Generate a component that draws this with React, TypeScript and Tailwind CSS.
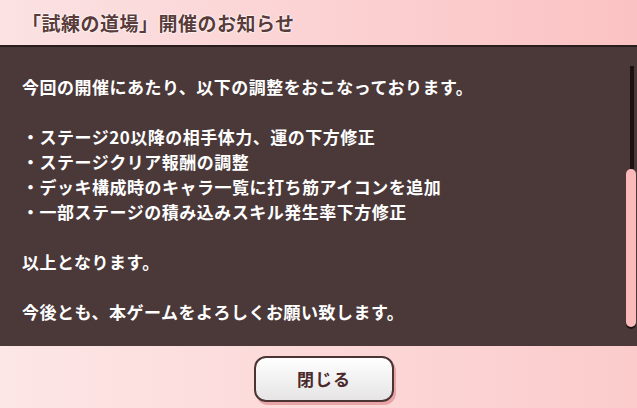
import React from "react";

const font = { fontFamily: '"Noto Sans CJK JP", "Noto Sans", sans-serif' };

export default function App() {
  return (
    <div
      className="w-[637px] h-[408px] flex flex-col overflow-hidden bg-gradient-to-r from-[#fde6e6] to-[#fbcbcb]"
      style={font}
    >
      <div className="h-[45px] shrink-0 flex items-center pl-[22px] bg-gradient-to-r from-[#fbe2e3] to-[#fbc2c3]">
        <span
          className="text-[19px] font-bold tracking-[0.5px] text-[#5a3b3a] leading-none"
          style={{ textShadow: "0 0 2px #fff, 0 0 2px #fff, 0 0 1px #fff" }}
        >
          「試練の道場」開催のお知らせ
        </span>
      </div>
      <div className="h-[2px] shrink-0 bg-[#2a1d1d]" />
      <div className="relative h-[299px] shrink-0 bg-[#4b393a] pl-[22px] pt-[27px] text-white text-[17px] font-bold tracking-[0.5px] leading-[25px]">
        <p>今回の開催にあたり、以下の調整をおこなっております。</p>
        <p>&nbsp;</p>
        <p>・ステージ20以降の相手体力、運の下方修正</p>
        <p>・ステージクリア報酬の調整</p>
        <p>・デッキ構成時のキャラ一覧に打ち筋アイコンを追加</p>
        <p>・一部ステージの積み込みスキル発生率下方修正</p>
        <p>&nbsp;</p>
        <p>以上となります。</p>
        <p>&nbsp;</p>
        <p>今後とも、本ゲームをよろしくお願い致します。</p>
        <div className="absolute left-[630px] top-[19px] w-[4px] h-[103px] bg-[#1c1212]" />
        <div className="absolute left-[626px] top-[122px] w-[10px] h-[158px] rounded-full bg-[#fbb9b9] shadow-[0_2px_0_#1c1212]" />
      </div>
      <div className="flex-1 flex items-center justify-center pt-[4px] pl-[11px]">
        <button className="w-[140px] h-[46px] rounded-[12px] border-2 border-[#4a3434] bg-gradient-to-b from-[#ffffff] to-[#e6e4e4] shadow-[2px_3px_0_#e8a4a6] text-[17px] font-bold text-[#4a2a2b] tracking-[1px]">
          閉じる
        </button>
      </div>
    </div>
  );
}
